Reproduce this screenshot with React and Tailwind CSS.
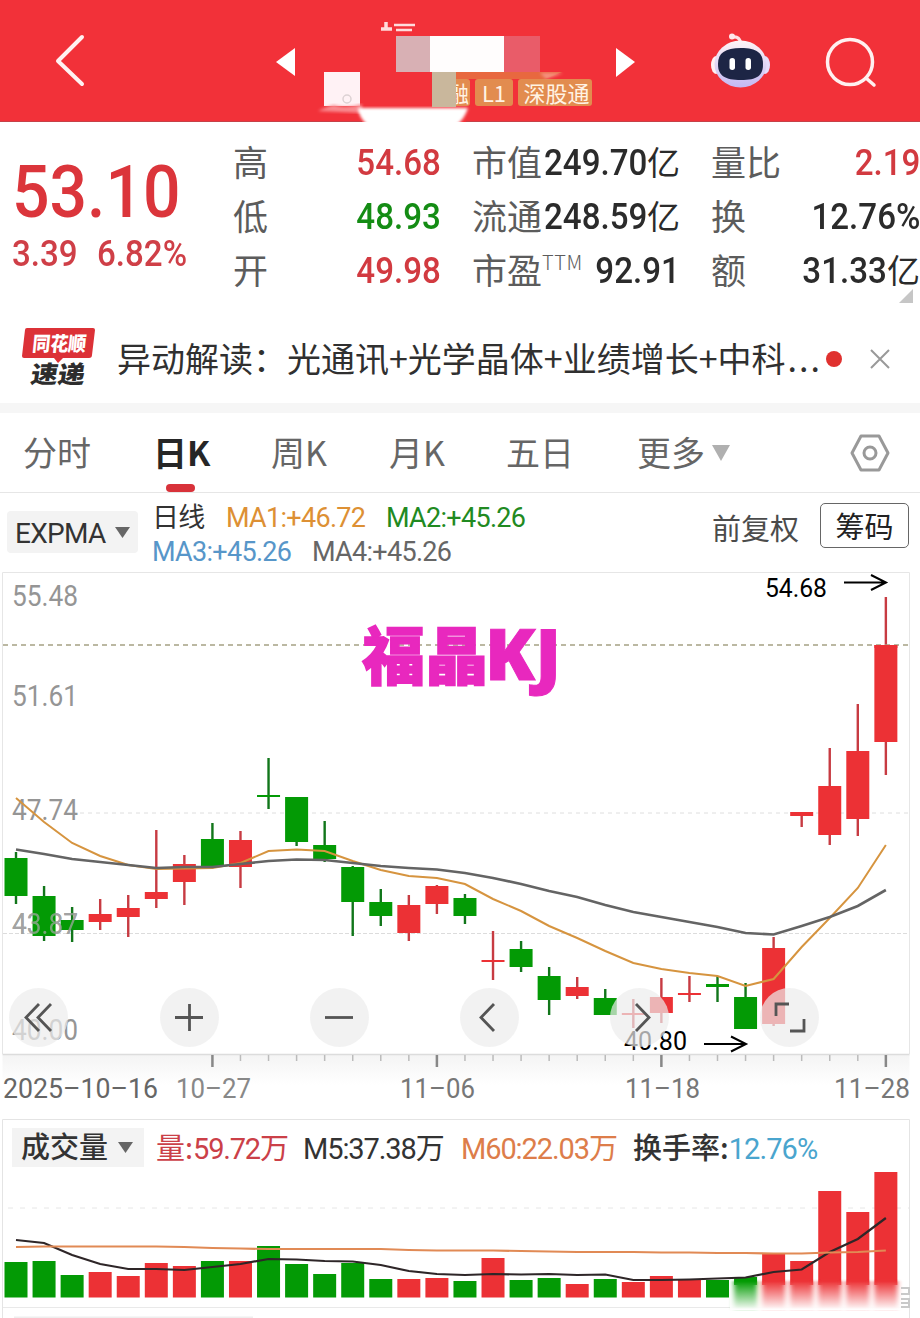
import React from "react";

const RED = "#ec3135";
const GREEN = "#039a05";
const BASELINE = 1297.5;

const candleX = (i) => 16 + i * 28.06;

// [up, bodyTop, bodyBottom, high, low, volumeTop]
const candles = [
  [false, 858, 896, 852, 904, 1262],
  [false, 896, 936, 886, 941, 1261],
  [false, 920, 930, 907, 942, 1275],
  [true, 914, 922, 899, 930, 1272],
  [true, 908, 917, 895, 937, 1276],
  [true, 892, 899, 830, 908, 1263],
  [true, 864, 882, 855, 905, 1266],
  [false, 839, 867, 823, 867, 1261],
  [true, 840, 867, 831, 888, 1261],
  [false, 795, 797, 758, 809, 1246],
  [false, 797, 842, 797, 846, 1264],
  [false, 845, 859, 821, 862, 1274],
  [false, 867, 902, 866, 936, 1263],
  [false, 902, 916, 889, 926, 1279],
  [true, 905, 933, 895, 941, 1279],
  [true, 886, 904, 885, 914, 1278],
  [false, 898, 916, 894, 924, 1281],
  [true, 960, 962, 931, 980, 1258],
  [false, 949, 967, 941, 972, 1280],
  [false, 976, 1000, 967, 1015, 1278],
  [true, 987, 996, 977, 999, 1284],
  [false, 998, 1015, 989, 1015, 1279],
  [true, 1013, 1015, 999, 1028, 1282],
  [true, 997, 1013, 978, 1023, 1276],
  [true, 993, 995, 976, 1002, 1280],
  [false, 984, 987, 976, 1002, 1280],
  [false, 997, 1029, 983, 1029, 1277],
  [true, 948, 1024, 937, 1026, 1253],
  [true, 812, 816, 812, 827, 1261],
  [true, 786, 835, 748, 845, 1191],
  [true, 751, 819, 704, 836, 1212],
  [true, 645, 742, 597, 775, 1172],
];

const fastLine = [
  798, 822, 843, 856, 865, 869, 868.5, 868, 863, 851, 849.5, 851, 861, 870, 876, 878,
  884, 899, 911, 926, 938, 951, 963, 969, 973, 976, 986, 979, 947, 918, 888, 845,
];
const slowLine = [
  849.5, 854, 859, 862, 865, 868, 867, 867, 864, 861, 859.5, 860, 863, 866, 868, 869.5,
  873, 878, 884, 891, 897, 905, 912, 917, 922, 927, 933, 934.5, 926, 917, 906, 890,
];
const volumeM5 = [
  1240, 1243, 1255, 1264, 1269, 1269, 1270, 1267, 1264, 1259, 1259.5, 1261, 1261.5, 1265, 1271, 1274,
  1275, 1274, 1274.5, 1274, 1275, 1274.5, 1280, 1280, 1279.5, 1278.5, 1277.5, 1272, 1269.5, 1252, 1239, 1218,
];
const volumeM60 = [
  1247, 1246.5, 1246.5, 1246.5, 1246.5, 1246.5, 1247, 1248, 1248.5, 1249, 1249, 1249, 1249, 1249, 1250, 1250.5,
  1250.5, 1250.5, 1251, 1251.5, 1252, 1252, 1252, 1252.5, 1252.5, 1253, 1253, 1253.5, 1253.5, 1252.5, 1252, 1250.5,
];

const toPoints = (values) => values.map((y, i) => `${candleX(i)},${y}`).join(" ");

const priceLabels = [
  { text: "55.48", y: 606 },
  { text: "51.61", y: 706 },
  { text: "47.74", y: 820 },
  { text: "43.87", y: 934 },
  { text: "40.00", y: 1040 },
];

const dateLabels = [
  { text: "2025-10-16", x: 3, width: 155, color: "#666" },
  { text: "10-27", x: 176, width: 75, color: "#888" },
  { text: "11-06", x: 400, width: 75, color: "#777" },
  { text: "11-18", x: 625, width: 75, color: "#777" },
  { text: "11-28", x: 834, width: 76, color: "#777" },
];

const stats = [
  [
    { label: "高", value: "54.68", color: "text-[#d23a40]" },
    { label: "低", value: "48.93", color: "text-[#148c14]" },
    { label: "开", value: "49.98", color: "text-[#d23a40]" },
  ],
  [
    { label: "市值", value: "249.70", unit: "亿", color: "text-[#2b2b2b]" },
    { label: "流通", value: "248.59", unit: "亿", color: "text-[#2b2b2b]" },
    { label: "市盈", sup: "TTM", value: "92.91", color: "text-[#2b2b2b]" },
  ],
  [
    { label: "量比", value: "2.19", color: "text-[#d23a40]" },
    { label: "换", value: "12.76%", color: "text-[#2b2b2b]" },
    { label: "额", value: "31.33", unit: "亿", color: "text-[#2b2b2b]" },
  ],
];

const statWidths = ["w-[208px] mr-[31px]", "w-[208px] mr-[31px]", "w-[209px]"];

const tabs = [
  { label: "分时", width: "w-[130px]" },
  { label: "日K", width: "w-[118px]", active: true },
  { label: "周K", width: "w-[118px]" },
  { label: "月K", width: "w-[117px]" },
  { label: "五日", width: "w-[131px]" },
  { label: "更多", width: "w-[75px]" },
];

const chartButtons = [
  { left: "left-[9px]", d: "M30 16 L17 29.5 L30 43 M42 16 L29 29.5 L42 43" },
  { left: "left-[160px]", d: "M15 29.5 H43 M29.5 16 V43" },
  { left: "left-[310px]", d: "M15 29.5 H43" },
  { left: "left-[460px]", d: "M34 16 L21 29.5 L34 43" },
  { left: "left-[610px]", d: "M26 16 L39 29.5 L26 43" },
  { left: "left-[760px]", d: "M16 28 V16 H29 M44 31 V43 H30" },
];

const Header = () => (
  <header className="relative h-[122px] bg-[#f23139]">
    <div className="absolute top-[79px] left-[446px] flex gap-[5px] text-[22px] leading-[27px] text-[#fff3e4]">
      <span className="w-[24px] rounded-[3px] bg-[#e28c4f] text-center">融</span>
      <span className="w-[38px] rounded-[3px] bg-[#e28c4f] text-center">L1</span>
      <span className="w-[74px] rounded-[3px] bg-[#e28c4f] pl-[3px] text-center">深股通</span>
    </div>
    <svg viewBox="0 0 920 122" className="relative block h-[122px] w-[920px]" fill="none">
      <defs>
        <filter id="soft"><feGaussianBlur stdDeviation="1.5" /></filter>
        <linearGradient id="shell" x1="0" y1="0" x2="0" y2="1">
          <stop offset="0" stopColor="#fff4f6" />
          <stop offset="1" stopColor="#c3b8f3" />
        </linearGradient>
      </defs>
      <path d="M82 37 L58 61 L82 84" stroke="#fff2f2" strokeWidth="4" strokeLinecap="round" strokeLinejoin="round" />
      <path d="M276 62 L295 48 V76 Z" fill="#fff" />
      <path d="M635 62 L616 48 V77 Z" fill="#fff" />

      {/* masked stock name */}
      <path d="M394 25 H415 M396 30 H412" stroke="#ffdcdc" strokeWidth="2.5" />
      <path d="M386 22 V28 M381 29 H392" stroke="#ffdcdc" strokeWidth="3.5" />
      <rect x="396" y="36" width="36" height="36" fill="#d8b0b4" />
      <rect x="504" y="36" width="36" height="36" fill="#e95c69" />
      <path d="M448 72 H562 L545 79 H448 Z" fill="#e8683f" />
      <path d="M540 73 H563 L546 79 Z" fill="#f7907f" filter="url(#soft)" />
      <rect x="430" y="36" width="74" height="36" fill="#fffdfd" />
      <rect x="324" y="72" width="36" height="34" fill="#fff2f5" />
      <circle cx="347" cy="99" r="4" stroke="#ddd2d4" strokeWidth="1.5" />
      <path d="M318 111 Q328 106 334 105 Q345 109 362 104 V113 Z" fill="#f98b90" filter="url(#soft)" />
      <path d="M358 108 H468 Q465 118 456 126 H368 Q358 116 358 108 Z" fill="#fff" filter="url(#soft)" />
      <rect x="432" y="72" width="24" height="35" fill="#c9b79c" />
      <rect x="0" y="121" width="362" height="1" fill="#a94c54" opacity="0.6" />
      <rect x="466" y="121" width="454" height="1" fill="#a94c54" opacity="0.6" />

      {/* assistant robot */}
      <path d="M741 43 Q739 36 733 37" stroke="#ffe1e5" strokeWidth="3" strokeLinecap="round" />
      <circle cx="732" cy="36.5" r="3" fill="#ffe9ec" />
      <ellipse cx="716" cy="65" rx="5" ry="9" fill="#fff0f3" />
      <ellipse cx="765" cy="65" rx="5" ry="9" fill="#e6dcfb" />
      <ellipse cx="740.5" cy="64" rx="26" ry="23.5" fill="url(#shell)" />
      <path d="M741 48 C757 48 763 53 763 64 C763 76 757 80 741 80 C725 80 718 76 718 64 C718 53 725 48 741 48 Z" fill="#1d2545" />
      <rect x="729.5" y="58" width="5.5" height="12" rx="2.7" fill="#fff" />
      <rect x="745.5" y="58" width="5.5" height="12" rx="2.7" fill="#fff" />

      <circle cx="850" cy="62" r="22.5" stroke="#fff0f0" strokeWidth="3.5" />
      <path d="M866 78 L874 85" stroke="#fff0f0" strokeWidth="3.5" strokeLinecap="round" />
    </svg>
  </header>
);

const Stat = ({ item }) => (
  <div className="flex h-[54px] items-center justify-between whitespace-nowrap">
    <span className="flex -translate-y-[2px] text-[35px] leading-[54px] text-[#5c5c5c]">
      {item.label}
      {item.sup && <span className="-mt-[7px] text-[20px] leading-[54px] font-light tracking-[0.5px]">{item.sup}</span>}
    </span>
    <span className={`flex items-center leading-[54px] ${item.color}`}>
      <span className="-ml-[10px] inline-block origin-right scale-x-[0.92] font-[Roboto] text-[36px] font-medium">{item.value}</span>
      {item.unit && <span className="-translate-y-[2px] text-[33px]">{item.unit}</span>}
    </span>
  </div>
);

const Quote = () => (
  <section className="relative flex h-[188px] pt-[14px]">
    <div className="w-[233px] shrink-0 pl-[12px] font-[Roboto] font-medium text-[#db353b]">
      <div className="mt-[14px] origin-left scale-x-[0.905] text-[73px] leading-[84px]">53.10</div>
      <div className="flex origin-left scale-x-[0.92] gap-[21px] text-[36px] leading-[40px] text-[#cf3f47]">
        <span>3.39</span>
        <span>6.82%</span>
      </div>
    </div>
    {stats.map((column, i) => (
      <div key={i} className={`shrink-0 ${statWidths[i]}`}>
        {column.map((item) => (
          <Stat key={item.label} item={item} />
        ))}
      </div>
    ))}
    <svg viewBox="0 0 14 14" className="absolute top-[167px] left-[899px] h-[14px] w-[14px]">
      <path d="M14 0 V14 H0 Z" fill="#c6c6c6" />
    </svg>
  </section>
);

const News = () => (
  <section className="flex h-[93px] items-center pt-[4px]">
    <svg viewBox="0 0 76 76" className="-mt-[3px] ml-[21px] h-[76px] w-[76px] shrink-0">
      <path d="M6 9 H72 Q74 9 74 11 L71 36 Q71 39 68 39 H42 L37 44 L33 39 H3 Q1 39 1 37 L4 11 Q4 9 6 9 Z" fill="#dc3137" />
      <text x="14" y="32" transform="skewX(-6)" textLength="54" lengthAdjust="spacingAndGlyphs" fontSize="20" fontWeight="900" fill="#fff">同花顺</text>
      <text x="19" y="64" transform="skewX(-9)" textLength="54" lengthAdjust="spacingAndGlyphs" fontSize="24" fontWeight="900" fill="#2d2d2d">速递</text>
    </svg>
    <p className="ml-[20px] w-[706px] -translate-y-[1px] text-[34px] leading-[50px] whitespace-nowrap text-[#303030]">
      异动解读：光通讯+光学晶体+业绩增长+中科<span className="ml-[2px] tracking-[2px]">...</span>
    </p>
    <span className="ml-[3px] h-[16px] w-[16px] shrink-0 rounded-full bg-[#e0312f]" />
    <svg viewBox="0 0 20 20" className="ml-[28px] h-[20px] w-[20px] shrink-0" stroke="#999" strokeWidth="2">
      <path d="M1 1 L19 19 M19 1 L1 19" />
    </svg>
  </section>
);

const Tabs = () => (
  <nav className="flex h-[80px] items-center border-b border-[#e6e6e6] pl-[23px] text-[34px] leading-[78px] text-[#666]">
    {tabs.map((tab) => (
      <div key={tab.label} className={`relative h-[79px] shrink-0 ${tab.width} ${tab.active ? "font-bold text-[#262626]" : ""}`}>
        {tab.label}
        {tab.active && <span className="absolute bottom-0 left-[13px] h-[8px] w-[29px] rounded-[4px] bg-[#d8323a]" />}
      </div>
    ))}
    <svg viewBox="0 0 18 16" className="h-[16px] w-[18px]">
      <path d="M0 0 H18 L9 16 Z" fill="#b0b0b0" />
    </svg>
    <svg viewBox="0 0 40 38" className="ml-[120px] h-[38px] w-[40px]" fill="none" stroke="#999" strokeWidth="3">
      <path d="M11 2 H29 L38 19 L29 36 H11 L2 19 Z" strokeLinejoin="round" />
      <circle cx="20" cy="19" r="6" />
    </svg>
  </nav>
);

const Caret = () => (
  <svg viewBox="0 0 15 11" className="h-[11px] w-[15px]">
    <path d="M0 0 H15 L7.5 11 Z" fill="#666" />
  </svg>
);

const Indicators = () => (
  <section className="flex h-[79px] items-start whitespace-nowrap">
    <div className="mt-[18px] ml-[7px] flex h-[42px] w-[131px] items-center gap-[9px] rounded-[4px] bg-[#f3f3f3] pl-[8px] font-[Roboto] text-[28px] tracking-[-0.7px] text-[#333]">
      <span className="pt-[3px]">EXPMA</span>
      <Caret />
    </div>
    <div className="ml-[14px] w-[560px] pt-[8px] font-[Roboto] text-[27px] leading-[34px] tracking-[-0.7px]">
      <div className="flex">
        <span className="w-[74px] -translate-y-[2px] font-['Noto_Sans_CJK_SC'] text-[27px] text-[#333]">日线</span>
        <span className="w-[160px] text-[#dd9034]">MA1:+46.72</span>
        <span className="text-[#218a21]">MA2:+45.26</span>
      </div>
      <div className="flex">
        <span className="w-[160px] text-[#5796c9]">MA3:+45.26</span>
        <span className="text-[#666]">MA4:+45.26</span>
      </div>
    </div>
    <div className="mt-[11px] w-[108px] text-[29px] leading-[46px] text-[#4b4b4b]">前复权</div>
    <div className="mt-[10px] h-[45px] w-[89px] rounded-[5px] border border-[#666] text-center text-[29px] leading-[42px] text-[#222]">筹码</div>
  </section>
);

const KLine = () => (
  <section className="relative h-[546px]">
    <svg viewBox="0 572 920 546" className="block h-[546px] w-[920px] font-[Roboto]">
      <defs>
        <linearGradient id="axisShade" x1="0" y1="0" x2="0" y2="1">
          <stop offset="0" stopColor="#f4f4f4" />
          <stop offset="1" stopColor="#ffffff" />
        </linearGradient>
      </defs>
      <rect x="2.5" y="1055" width="907" height="30" fill="url(#axisShade)" />
      <path d="M2.5 1054 V572.5 H909.5 V1054" fill="none" stroke="#e6e6e6" />
      <path d="M2.5 1054.5 H909.5" stroke="#dcdcdc" strokeWidth="1.5" />
      <path d="M80 813 H909" stroke="#dedede" strokeDasharray="4 4" />
      <path d="M3 933.5 H909" stroke="#dcdcdc" strokeDasharray="4 2" />

      {priceLabels.map((label) => (
        <text key={label.text} x="12" y={label.y} fontSize="29" fill="#959595" textLength="66" lengthAdjust="spacingAndGlyphs">
          {label.text}
        </text>
      ))}

      {candles.map(([up, top, bottom, high, low], i) => (
        <g key={i}>
          <rect x={candleX(i) - 1.2} y={high} width="2.4" height={low - high} fill={up ? "#c73b42" : "#11761a"} />
          <rect x={candleX(i) - 11.5} y={top} width="23" height={bottom - top} fill={up ? RED : GREEN} />
        </g>
      ))}
      <text x="12" y="934" fontSize="29" fill="#a9a9a9" opacity="0.7" textLength="66" lengthAdjust="spacingAndGlyphs">43.87</text>

      <path d="M3 645 H909" stroke="#a5a184" strokeWidth="1.6" strokeDasharray="5 4" />
      <rect x="874.4" y="645" width="23" height="3" fill={RED} />
      <polyline points={toPoints(fastLine)} fill="none" stroke="#d6943f" strokeWidth="2" />
      <polyline points={toPoints(slowLine)} fill="none" stroke="#646464" strokeWidth="2.6" />

      <g fontSize="26" fill="#000">
        <text x="765" y="597" textLength="62" lengthAdjust="spacingAndGlyphs">54.68</text>
        <text x="624" y="1050" textLength="63" lengthAdjust="spacingAndGlyphs">40.80</text>
      </g>
      <path d="M844 582.5 H885 M871 575 L886 582.5 L871 590" fill="none" stroke="#000" strokeWidth="2" />
      <path d="M704 1044 H745 M731 1036.5 L746 1044 L731 1051.5" fill="none" stroke="#000" strokeWidth="2" />

      <g fill="#e828be" stroke="#e828be" fontWeight="900">
        <text x="362" y="679" fontFamily="Noto Sans CJK SC" fontSize="63" strokeWidth="1.5" textLength="126" lengthAdjust="spacingAndGlyphs">福晶</text>
        <text x="485" y="680" fontFamily="Open Sans" fontSize="70" strokeWidth="1" textLength="76" lengthAdjust="spacingAndGlyphs">KJ</text>
      </g>

      {candles.slice(7).map((_, i) => {
        const major = i % 8 === 0;
        return (
          <path
            key={i}
            d={`M${candleX(i + 7)} 1055 V${major ? 1067 : 1061}`}
            stroke={major ? "#888" : "#bbb"}
            strokeWidth={major ? 2.5 : 1.5}
          />
        );
      })}
      {dateLabels.map((label) => (
        <text key={label.text} x={label.x} y="1098" fontSize="28" fill={label.color} textLength={label.width} lengthAdjust="spacingAndGlyphs">
          {label.text.replaceAll("-", "–")}
        </text>
      ))}
    </svg>

    {chartButtons.map((button) => (
      <button key={button.left} className={`absolute top-[416px] h-[59px] w-[59px] rounded-full bg-[#ececec]/70 ${button.left}`}>
        <svg viewBox="0 0 59 59" className="h-[59px] w-[59px]" fill="none" stroke="#555" strokeWidth="2.8">
          <path d={button.d} />
        </svg>
      </button>
    ))}
  </section>
);

const Volume = () => (
  <section className="relative h-[200px]">
    <svg viewBox="0 1118 920 200" className="absolute inset-0 h-[200px] w-[920px]">
      <defs>
        <filter id="smear" x="-5%" y="-20%" width="110%" height="140%"><feGaussianBlur stdDeviation="2.5 1" /></filter>
        <linearGradient id="fade" x1="0" y1="0" x2="0" y2="1">
          <stop offset="0" stopColor="#fff" stopOpacity="0" />
          <stop offset="1" stopColor="#fff" stopOpacity="1" />
        </linearGradient>
      </defs>
      <path d="M2.5 1318 V1119.5 H909.5 V1318" fill="none" stroke="#e4e4e4" />
      <path d="M8 1208 H909" stroke="#e6e6e6" strokeDasharray="5 7" />
      <path d="M3 1307.5 H909" stroke="#e9e9e9" />
      <path d="M14 1317.5 H253" stroke="#eeeeee" strokeWidth="2" />
      {candles.map(([up, , , , , top], i) => (
        <rect
          key={i}
          x={candleX(i) - 11.5}
          y={top}
          width="23"
          height={(i > 25 ? 1285 : BASELINE) - top}
          fill={up ? RED : GREEN}
        />
      ))}
      <g filter="url(#smear)">
        {candles.slice(26).map(([up], i) => (
          <rect key={i} x={candleX(i + 26) - 11.5} y="1281" width="23" height="28" fill={up ? RED : GREEN} />
        ))}
      </g>
      <rect x="730" y="1281" width="175" height="29" fill="url(#fade)" />
      <polyline points={toPoints(volumeM5)} fill="none" stroke="#2e2628" strokeWidth="2.2" />
      <polyline points={toPoints(volumeM60)} fill="none" stroke="#e18a55" strokeWidth="2.2" />
      <path d="M901 1288 H909 V1294 H901 M901 1299 H909 V1307 H901 M901 1303 H908" fill="none" stroke="#c9c9c9" strokeWidth="2" />
    </svg>
    <div className="relative flex pt-[10px] pl-[12px] text-[29px] leading-[39px] whitespace-nowrap">
      <div className="mr-[12px] flex h-[39px] w-[132px] shrink-0 items-center gap-[9px] bg-[#f3f3f3] pl-[9px] font-medium text-[#333]">
        <span className="w-[88px] -translate-y-[2px]">成交量</span>
        <Caret />
      </div>
      <div className="w-[147px] shrink-0 -translate-y-[1px] text-[#cb4048]">量:<span className="font-[Roboto] tracking-[-1.2px]">59.72</span>万</div>
      <div className="w-[158px] shrink-0 -translate-y-[1px] text-[#333]"><span className="font-[Roboto] tracking-[-1.1px]">M5:37.38</span>万</div>
      <div className="w-[172px] shrink-0 -translate-y-[1px] text-[#dd7d4a]"><span className="font-[Roboto] tracking-[-1.1px]">M60:22.03</span>万</div>
      <div className="-translate-y-[1px] font-medium text-[#333]">换手率:<span className="font-[Roboto] font-normal tracking-[-0.9px] text-[#4aa5ce]">12.76%</span></div>
    </div>
  </section>
);

const App = () => {
  return (
    <main className="h-[1318px] w-[920px] overflow-hidden bg-white font-['Noto_Sans_CJK_SC',sans-serif]">
      <Header />
      <Quote />
      <News />
      <div className="h-[10px] bg-[#f6f6f6]" />
      <Tabs />
      <Indicators />
      <KLine />
      <Volume />
    </main>
  );
};

export default App;
